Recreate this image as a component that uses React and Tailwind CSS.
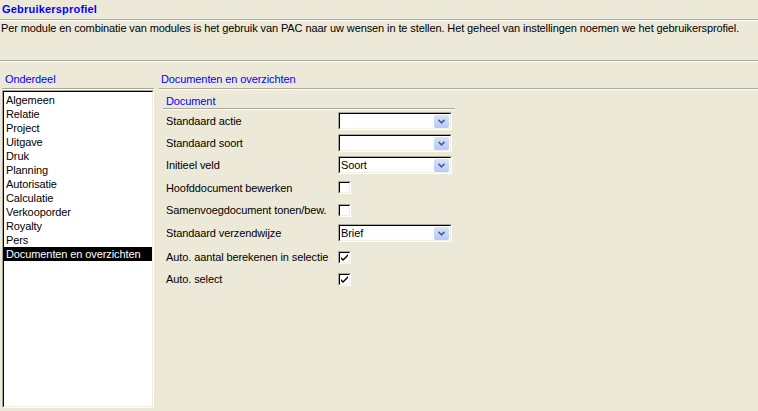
const onderdelen = [
  'Algemeen',
  'Relatie',
  'Project',
  'Uitgave',
  'Druk',
  'Planning',
  'Autorisatie',
  'Calculatie',
  'Verkooporder',
  'Royalty',
  'Pers',
  'Documenten en overzichten',
];

// label, kind, value, row height class
const velden = [
  { label: 'Standaard actie', kind: 'combo', value: '', h: 'h-[22px]' },
  { label: 'Standaard soort', kind: 'combo', value: '', h: 'h-[22px]' },
  { label: 'Initieel veld', kind: 'combo', value: 'Soort', h: 'h-[22px]' },
  { label: 'Hoofddocument bewerken', kind: 'check', value: false, h: 'h-[23px]' },
  { label: 'Samenvoegdocument tonen/bew.', kind: 'check', value: false, h: 'h-[22px]' },
  { label: 'Standaard verzendwijze', kind: 'combo', value: 'Brief', h: 'h-[24px]' },
  { label: 'Auto. aantal berekenen in selectie', kind: 'check', value: true, h: 'h-[24px]' },
  { label: 'Auto. select', kind: 'check', value: true, h: 'h-[20px]' },
];

function Etched({ className = '' }) {
  return <div className={`h-[2px] border-t border-[#ACA899] bg-white ${className}`} />;
}

function Combo({ value }) {
  return (
    <div className="w-[114px] h-[18px] flex border border-t-[#ACA899] border-l-[#ACA899] border-r-white border-b-white">
      <div className="flex-1 flex items-center border border-t-black border-l-black border-r-[#F1EFE2] border-b-[#F1EFE2] bg-white">
        <span className="flex-1 pl-[1px] leading-none">{value}</span>
        <div className="w-[15px] h-[13px] mr-[1px] rounded-[2px] bg-gradient-to-b from-[#D6E2FD] to-[#B6CAF8] flex items-center justify-center">
          <svg width="7" height="5" viewBox="0 0 7 5">
            <path d="M0.5 0.8 L3.5 3.8 L6.5 0.8" fill="none" stroke="#4D6185" strokeWidth="1.6" />
          </svg>
        </div>
      </div>
    </div>
  );
}

function Check({ checked }) {
  return (
    <div className="w-[13px] h-[13px] border border-t-[#ACA899] border-l-[#ACA899] border-r-white border-b-white">
      <div className="w-full h-full border border-t-black border-l-black border-r-[#F1EFE2] border-b-[#F1EFE2] bg-white flex items-center justify-center">
        {checked && (
          <svg width="7" height="7" viewBox="0 0 7 7">
            <path d="M0 3 L0 5 L2 7 L7 2 L7 0 L2 5 Z" fill="#000" />
          </svg>
        )}
      </div>
    </div>
  );
}

export default function App() {
  const selected = 'Documenten en overzichten';

  return (
    <div className="w-[758px] h-[411px] overflow-hidden bg-[#ECE9D8] text-black text-[11px] leading-[14px] tracking-[-0.1px] font-['Liberation_Sans',Arial,sans-serif] flex flex-col">
      {/* Titel */}
      <div className="h-[19px] pl-[2px] pt-[2px] font-bold tracking-[0.2px] text-[#0000FF]">Gebruikersprofiel</div>
      <Etched />
      <div className="h-[39px] pl-[1px]">
        Per module en combinatie van modules is het gebruik van PAC naar uw wensen in te stellen. Het geheel van instellingen noemen we het gebruikersprofiel.
      </div>
      <Etched />

      <div className="flex-1 flex min-h-0">
        {/* Onderdeel */}
        <div className="w-[159px] flex flex-col pl-[2px] pr-[5px]">
          <div className="h-[26px] pt-[10px] pl-[3px] text-[#0000FF]">Onderdeel</div>
          <Etched />
          <div className="h-[318px] border border-t-[#ACA899] border-l-[#ACA899] border-r-white border-b-white">
            <div className="h-full border border-t-black border-l-black border-r-[#F1EFE2] border-b-[#F1EFE2] bg-white pt-[1px]">
              {onderdelen.map((o) => (
                <div
                  key={o}
                  className={`h-[14px] pl-[2px] ${o === selected ? 'bg-black text-white' : ''}`}
                >
                  {o}
                </div>
              ))}
            </div>
          </div>
        </div>

        {/* Documenten en overzichten */}
        <div className="flex-1 flex flex-col">
          <div className="h-[26px] pt-[10px] pl-[2px] text-[#0000FF]">Documenten en overzichten</div>
          <Etched />
          <div className="w-[292px] ml-[4px] flex flex-col">
            <div className="h-[18px] pt-[4px] pl-[3px] text-[#0000FF]">Document</div>
            <Etched />
            {velden.map((v) => (
              <div key={v.label} className={`${v.h} flex items-center pl-[3px]`}>
                <span className="w-[172px]">{v.label}</span>
                {v.kind === 'combo' ? <Combo value={v.value} /> : <Check checked={v.value} />}
              </div>
            ))}
          </div>
        </div>
      </div>
    </div>
  );
}
